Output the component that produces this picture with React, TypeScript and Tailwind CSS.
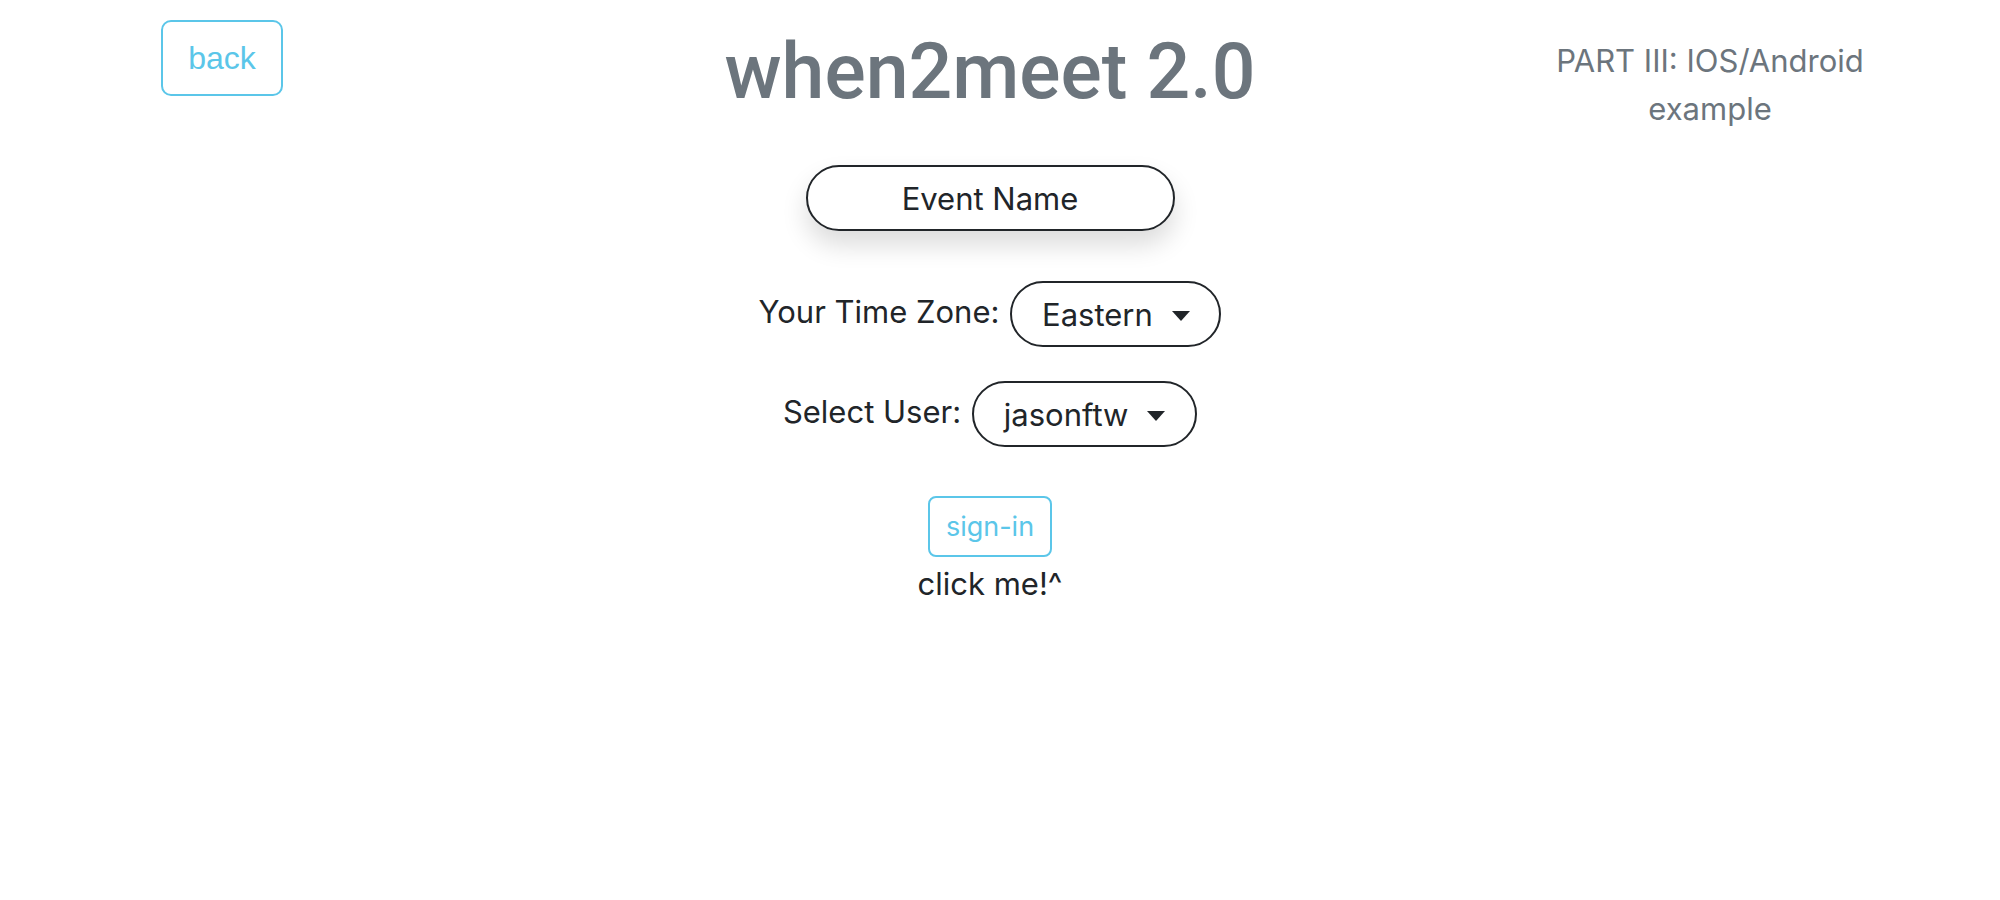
import React from 'react'

const sans = "font-['Inter','Noto_Sans',sans-serif]"

const Caret = () => (
    <svg width="18" height="10" viewBox="0 0 18 10" className="shrink-0">
        <path d="M0 0 L18 0 L9 10 Z" fill="#212529" />
    </svg>
)

const SelectPill = ({ value, width }: { value: string; width: string }) => (
    <div className={`h-[66px] ${width} rounded-full border-2 border-[#212529] flex items-center justify-center gap-[19px] pt-[3px] text-[31px] text-[#212529]`}>
        <span>{value}</span>
        <Caret />
    </div>
)

const App = () => {
    return (
        <div className={`w-[2000px] h-[900px] bg-white ${sans}`}>
            <div className="flex">
                <div className="w-[444px] flex justify-center pt-[20px]">
                    <button className="h-[76px] px-[25px] rounded-[10px] border-2 border-[#5bc6e9] text-[#5bc6e9] text-[32px] font-['Liberation_Sans',sans-serif]">
                        back
                    </button>
                </div>

                <div className="w-[1092px] flex flex-col items-center">
                    <h1 className="mt-[24px] text-[77px] leading-[96px] font-medium text-[#6c757d] font-['Roboto',sans-serif]">
                        when2meet 2.0
                    </h1>

                    <div className="mt-[45px] w-[369px] h-[66px] pt-[3px] rounded-full border-2 border-[#212529] shadow-[0_14px_26px_rgba(0,0,0,0.14)] flex items-center justify-center text-[31px] text-[#212529]">
                        Event Name
                    </div>

                    <div className="mt-[50px] flex items-center gap-[11px]">
                        <span className="text-[31px] text-[#212529] -mt-[4px]">Your Time Zone:</span>
                        <SelectPill value="Eastern" width="w-[211px]" />
                    </div>

                    <div className="mt-[34px] flex items-center gap-[11px]">
                        <span className="text-[31px] text-[#212529] -mt-[4px]">Select User:</span>
                        <SelectPill value="jasonftw" width="w-[225px]" />
                    </div>

                    <button className="mt-[49px] h-[61px] px-[16px] pt-[2px] rounded-[8px] border-2 border-[#5bc6e9] text-[#5bc6e9] text-[27px]">
                        sign-in
                    </button>
                    <p className="mt-[3px] text-[31px] leading-[48px] text-[#212529]">click me!^</p>
                </div>

                <div className="w-[348px] pt-[37px] text-center text-[31px] leading-[48px] text-[#6c757d]">
                    PART III: IOS/Android example
                </div>
            </div>
        </div>
    )
}

export default App
